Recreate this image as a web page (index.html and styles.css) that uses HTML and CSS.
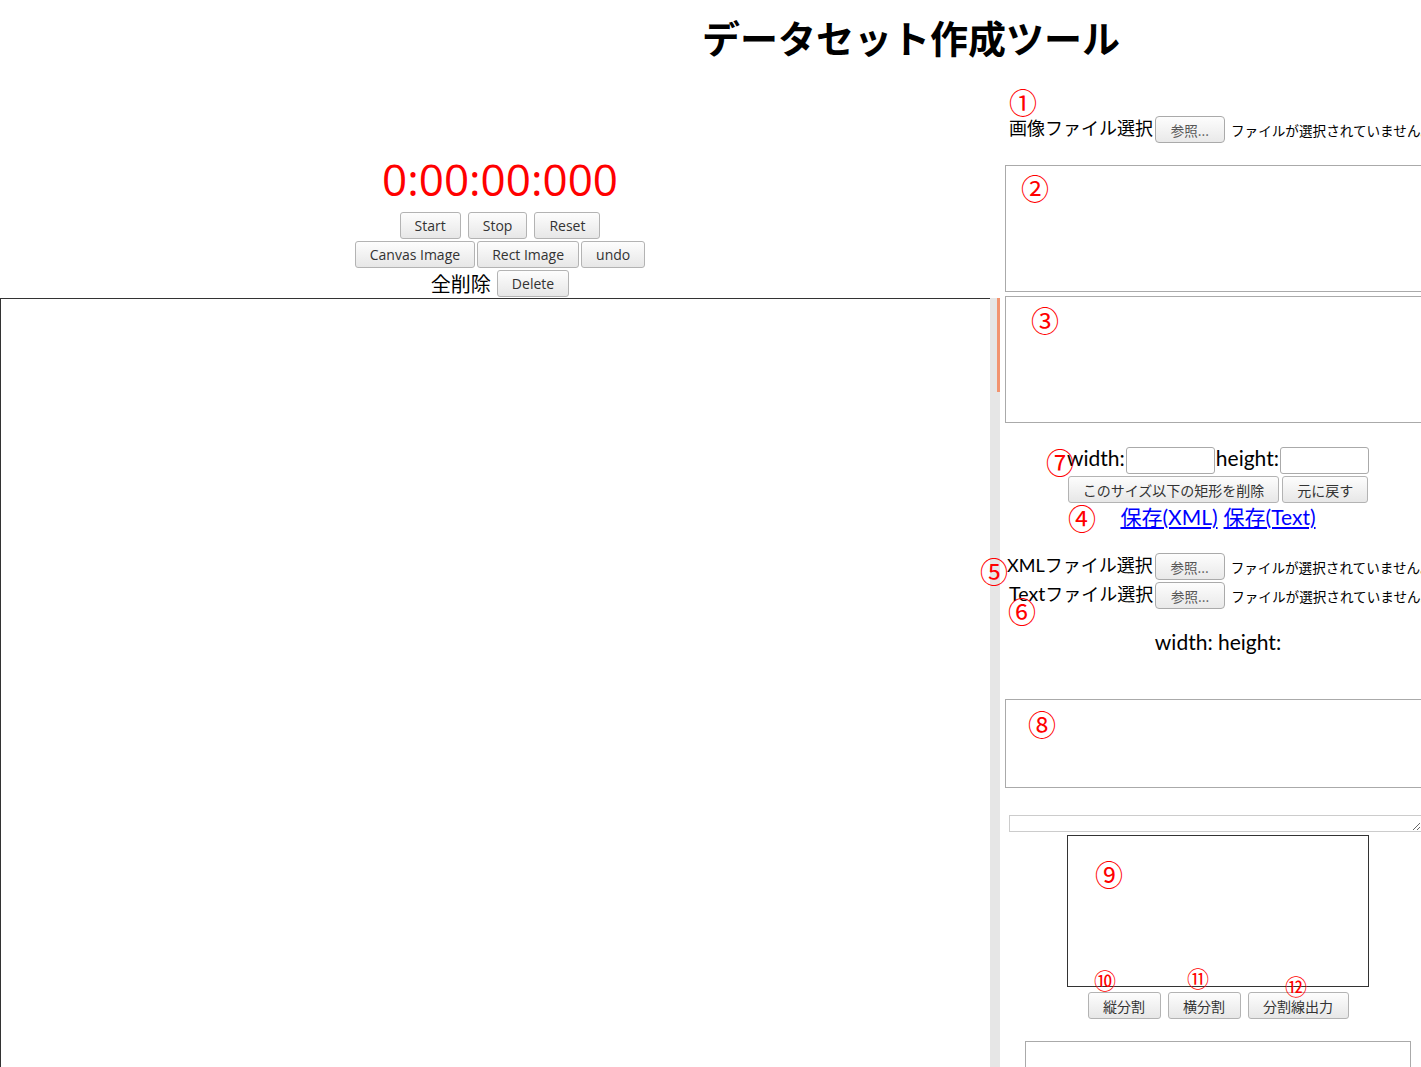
FILE: index.html
```html
<!DOCTYPE html>
<html lang="ja">
<head>
<meta charset="utf-8">
<title>データセット作成ツール</title>
<link rel="stylesheet" href="styles.css">
</head>
<body>
<h1 class="title">データセット作成ツール</h1>
<div class="main">
  <div class="left">
    <div class="timer">0:00:00:000</div>
    <div class="btn-row row1">
      <button class="btn">Start</button>
      <button class="btn">Stop</button>
      <button class="btn">Reset</button>
    </div>
    <div class="btn-row row2">
      <button class="btn">Canvas Image</button>
      <button class="btn">Rect Image</button>
      <button class="btn">undo</button>
    </div>
    <div class="btn-row row3">
      <span class="label">全削除</span>
      <button class="btn">Delete</button>
    </div>
    <div class="canvas-wrap">
      <div class="canvas-area"></div>
      <div class="scrollbar"><div class="thumb"></div></div>
    </div>
  </div>

  <div class="right">
    <span class="num n1">①</span>
    <div class="file-row r-img">
      <span class="file-label">画像ファイル選択</span>
      <button class="file-btn">参照...</button>
      <span class="file-status">ファイルが選択されていません。</span>
    </div>

    <div class="box box2"><span class="num n2">②</span></div>
    <div class="box box3"><span class="num n3">③</span></div>

    <div class="size-row">
      <span class="num n7">⑦</span>
      <span class="en">width:</span>
      <input class="size-input" type="text">
      <span class="en">height:</span>
      <input class="size-input" type="text">
    </div>
    <div class="center-btns size-btns">
      <button class="btn">このサイズ以下の矩形を削除</button>
      <button class="btn">元に戻す</button>
    </div>
    <div class="links">
      <span class="num n4">④</span>
      <a href="#">保存(XML)</a>
      <a href="#">保存(Text)</a>
    </div>

    <div class="file-row r-xml">
      <span class="num n5">⑤</span>
      <span class="file-label"><span class="en-s">XML</span>ファイル選択</span>
      <button class="file-btn">参照...</button>
      <span class="file-status">ファイルが選択されていません。</span>
    </div>
    <div class="file-row r-txt">
      <span class="num n6">⑥</span>
      <span class="file-label"><span class="en-s">Text</span>ファイル選択</span>
      <button class="file-btn">参照...</button>
      <span class="file-status">ファイルが選択されていません。</span>
    </div>

    <div class="wh en">width: height:</div>

    <div class="box box8"><span class="num n8">⑧</span></div>

    <textarea class="ta-thin"></textarea>

    <div class="split-canvas"><span class="num n9">⑨</span></div>

    <div class="center-btns split-btns">
      <span class="num small n10">⑩</span>
      <span class="num small n11">⑪</span>
      <span class="num small n12">⑫</span>
      <button class="btn">縦分割</button>
      <button class="btn">横分割</button>
      <button class="btn">分割線出力</button>
    </div>

    <textarea class="ta-bottom"></textarea>
  </div>
</div>
</body>
</html>
```

FILE: styles.css
```css
* {
  box-sizing: border-box;
}

html,
body {
  margin: 0;
  padding: 0;
  overflow: hidden;
  background: #fff;
}

body {
  width: 1421px;
  height: 1067px;
  font-family: "Noto Sans CJK JP", sans-serif;
  font-size: 18px;
  color: #000;
}

.en {
  font-family: Lato, "Noto Sans CJK JP", sans-serif;
  font-size: 21px;
}

.en-s {
  font-family: Lato, "Noto Sans CJK JP", sans-serif;
  font-size: 18px;
}

.title {
  margin: 0;
  padding: 18px 0 24px 702px;
  font-family: "Noto Sans CJK JP", sans-serif;
  font-weight: bold;
  font-size: 38px;
  line-height: 38px;
  white-space: nowrap;
}

.main {
  display: flex;
  height: 987px;
}

/* ---------- left column ---------- */
.left {
  width: 1000px;
  flex: none;
  display: flex;
  flex-direction: column;
  align-items: center;
}

.timer {
  margin-top: 74px;
  font-family: "Open Sans", sans-serif;
  font-size: 44px;
  line-height: 50px;
  color: #f00;
}

.btn-row {
  display: flex;
  align-items: center;
  height: 27px;
  margin-top: 2px;
}

.row1 {
  margin-top: 8px;
  gap: 7px;
}

.row2 {
  gap: 2px;
}

.row3 {
  gap: 6px;
}

.btn {
  flex: none;
  height: 27px;
  padding: 0 14px;
  font-family: "Open Sans", "Noto Sans CJK JP", sans-serif;
  font-size: 14px;
  color: #333;
  background: linear-gradient(#fdfdfd, #e7e7e7);
  border: 1px solid #b3b3b3;
  border-radius: 3px;
  white-space: nowrap;
}

.label {
  font-size: 20px;
  line-height: 22px;
}

.canvas-wrap {
  align-self: stretch;
  flex: 1;
  display: flex;
  margin-top: 1px;
}

.canvas-area {
  width: 990px;
  border-top: 1px solid #333;
  border-left: 1px solid #333;
}

.scrollbar {
  width: 10px;
  background: #e6e6e6;
}

.thumb {
  margin-left: 7px;
  width: 3px;
  height: 94px;
  background: #f29470;
}

/* ---------- right column ---------- */
.right {
  width: 426px;
  flex: none;
  margin-left: 5px;
  position: relative;
  display: flex;
  flex-direction: column;
}

.num {
  position: absolute;
  color: #f00;
  font-family: "Noto Sans CJK JP", sans-serif;
  font-size: 28px;
  line-height: 28px;
  font-weight: normal;
}

.num.small {
  font-size: 22px;
  line-height: 22px;
}

.file-row {
  position: relative;
  display: flex;
  align-items: center;
  height: 27px;
  flex: none;
  white-space: nowrap;
}

.file-label {
  flex: none;
  align-self: flex-start;
  font-size: 18px;
  line-height: 23px;
}

.file-btn {
  flex: none;
  width: 70px;
  height: 27px;
  margin-left: 2px;
  padding: 0;
  font-family: "Noto Sans CJK JP", sans-serif;
  font-size: 13.5px;
  color: #555;
  background: linear-gradient(#fdfdfd, #e9e9e9);
  border: 1px solid #aaa;
  border-radius: 4px;
}

.file-status {
  flex: none;
  margin-left: 6px;
  font-size: 13.6px;
}

.n1 { left: 4px; top: 8px; }

.r-img {
  margin-top: 36px;
  padding-left: 4px;
}

.box {
  position: relative;
  width: 426px;
  border: 1px solid #aaa;
  flex: none;
}

.box2 {
  margin-top: 22px;
  height: 127px;
}

.box3 {
  margin-top: 4px;
  height: 127px;
}

.n2 { left: 15px; top: 8px; }
.n3 { left: 25px; top: 9px; }

.size-row {
  position: relative;
  margin-top: 24px;
  display: flex;
  justify-content: center;
  align-items: flex-start;
  height: 27px;
  flex: none;
  gap: 1px;
}

.size-row .en {
  line-height: 22px;
}

.size-input {
  flex: none;
  width: 89px;
  height: 27px;
  border: 1px solid #aaa;
  border-radius: 3px;
  background: #fff;
}

.n7 { left: 41px; top: 1px; }

.center-btns {
  position: relative;
  display: flex;
  justify-content: center;
  align-items: center;
  height: 27px;
  flex: none;
}

.size-btns {
  margin-top: 2px;
  gap: 3px;
}

.links {
  position: relative;
  margin-top: 3px;
  display: flex;
  justify-content: center;
  gap: 6px;
  height: 24px;
  flex: none;
  font-family: Lato, "Noto Sans CJK JP", sans-serif;
  font-size: 21px;
  line-height: 22px;
}

.links a {
  color: #00f;
  text-decoration: underline;
}

.n4 { left: 63px; top: -2px; }

.r-xml {
  margin-top: 23px;
  padding-left: 2px;
}

.r-txt {
  margin-top: 2px;
  padding-left: 4px;
}

.r-txt .en-s {
  font-size: 19.6px;
}

.n5 { left: -25px; top: 4px; }
.n6 { left: 3px; top: 15px; }

.wh {
  margin-top: 21px;
  height: 24px;
  line-height: 24px;
  flex: none;
  text-align: center;
}

.box8 {
  margin-top: 45px;
  height: 89px;
}

.n8 { left: 22px; top: 10px; }

.ta-thin {
  margin: 27px 0 0 4px;
  width: 413px;
  height: 17px;
  border: 1px solid #ccc;
  resize: vertical;
  padding: 0;
  flex: none;
}

.split-canvas {
  position: relative;
  align-self: center;
  margin-top: 3px;
  width: 302px;
  height: 152px;
  border: 1px solid #333;
  flex: none;
}

.n9 { left: 27px; top: 24px; }

.split-btns {
  margin-top: 5px;
  gap: 7px;
}

.split-btns .btn {
  padding: 0 14.5px;
}

.n10 { left: 89px; top: -24px; }
.n11 { left: 182px; top: -26px; }
.n12 { left: 280px; top: -18px; }

.ta-bottom {
  align-self: center;
  margin-top: 22px;
  width: 386px;
  height: 60px;
  border: 1px solid #aaa;
  padding: 0;
  flex: none;
}
```
